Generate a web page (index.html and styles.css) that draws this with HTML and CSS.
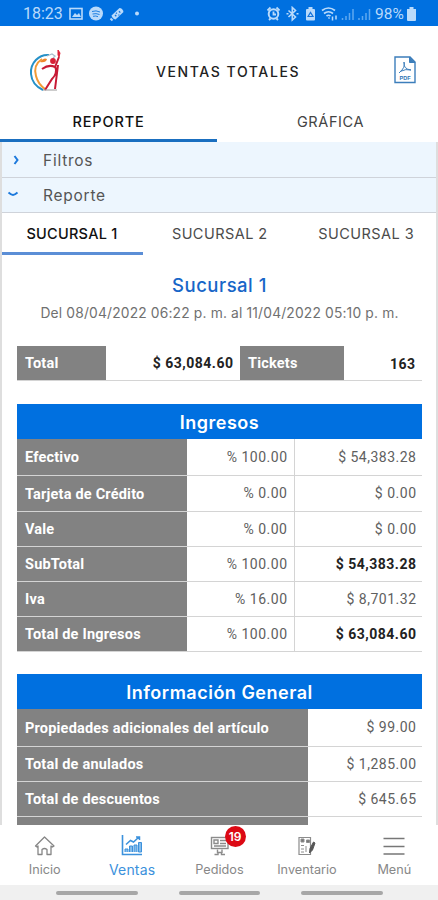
FILE: index.html
```html
<!DOCTYPE html>
<html lang="es">
<head>
<meta charset="utf-8">
<meta name="viewport" content="width=device-width, initial-scale=1">
<title>Ventas totales</title>
<link rel="stylesheet" href="styles.css">
</head>
<body>
<div class="app">
  <div class="status">
    <span class="clock">18:23</span>
    <svg class="status-left" width="72" height="16" viewBox="0 0 72 16" fill="none" stroke="#b9dafb" stroke-width="1.6">
      <rect x="1" y="2.5" width="12" height="10.5"/><path d="M3 11l3-4 2 2 2-2 2 4z" fill="#b9dafb" stroke="none"/>
      <circle cx="27" cy="7.5" r="7" fill="#b9dafb" stroke="none"/><path d="M23 5.500q4-1.500 8 .5M23.500 8q3.500-1 7 .5M24 10.300q3-.8 5 .4" stroke="#1f80e2" stroke-width="1"/>
      <path d="M42.500 9.500l8-7.500q3 0 4 4l-8 7.500q-3-.5-4-4z" fill="#b9dafb" stroke="none"/><path d="M41.500 12.500l2 2" stroke-width="2"/><path d="M46 9l1.300 1.300M50 5.300l1.300 1.300M49.500 8.600l.8.8M47 6.800l.8.800" stroke="#1473db" stroke-width="1.300"/>
      <circle cx="68" cy="7.500" r="2" fill="#b9dafb" stroke="none"/>
    </svg>
    <svg class="status-right" width="106" height="16" viewBox="0 0 106 16" fill="none" stroke="#b9dafb" stroke-width="1.600">
      <circle cx="7.500" cy="8" r="4.800" stroke-width="2"/><path d="M1.500 4.500l3-3M13.500 4.500l-3-3M3 14l1.500-1.500M12 14l-1.500-1.500M7.500 5.500v3h2.500" stroke-width="1.800"/>
      <path d="M22.500 4.500l7 6.500-3.200 3V1.500l3.200 3-7 6.500M20.500 7.800h2M30.500 7.800h2" />
      <rect x="40" y="3" width="9" height="11.500" rx="1" fill="#b9dafb" stroke="none"/><rect x="42.500" y="1" width="4" height="2" fill="#b9dafb" stroke="none"/><path d="M42 10.500l2.500-4 2.500 4z" stroke="#1473db" stroke-width="1.200"/>
      <path d="M56 4.500q6.500-5 13 0M58 7.500q4.500-3.500 9 0M60.500 10q2-1.500 4 0M62.500 12.500l1-1" stroke-width="1.700"/><path d="M66.500 14.500v-4M70 9.500v4" stroke-width="1.500"/>
      <path d="M76.500 14v-2M80 14v-4M83.500 14V7M87 14V3M93 14v-2M96.500 14v-4M100 14V7M103.500 14V3" stroke="#5ea8f0" stroke-width="1.500"/>
    </svg>
    <span class="percent">98%</span>
    <svg class="battery" width="9" height="14" viewBox="0 0 9 14"><path d="M2.500 0h4v2H9v11q0 1-1 1H1q-1 0-1-1V2h2.500z" fill="#b9dafb"/></svg>
  </div>

  <header class="header">
    <svg class="logo" width="34" height="44" viewBox="0 0 34 44" fill="none">
      <path d="M20 6C10 5 1 14 2 25q1 11 12 16" stroke="#2590c7" stroke-width="2"/>
      <path d="M13 10C7 14 5 20 7 27q2 8 9 13" stroke="#f39a35" stroke-width="2"/>
      <path d="M11 13q4-5 7-3-1 4-7 3z" fill="#ef8629"/>
      <path d="M18 7l5-2 3 2-2 2" stroke="#a8bccb" stroke-width="1.300"/>
      <circle cx="24" cy="12" r="2.900" fill="#d81f36"/>
      <path d="M13 20q7-5 13-2l4-10M26 17q3 7-3 13l-7 11M29 16l-3 24" stroke="#c71a35" stroke-width="2"/>
      <path d="M29 1l2 3-1 4-1-2z" fill="#df2036" stroke="#df2036"/>
      <path d="M14 41h14" stroke="#9a9a9a"/>
    </svg>
    <h1 class="title">VENTAS TOTALES</h1>
    <svg class="pdf" width="22" height="28" viewBox="0 0 22 28" fill="none" stroke="#3c7ebb">
      <path d="M1 1h15l5 5v20.500H1z" stroke-width="1.400"/><path d="M15.500 1v5.500H21z" fill="#3c7ebb"/>
      <path d="M10 6q2 5-5 11M10 6q-1 7 7 8M6 15.500q6-3 11-1.500" stroke-width="1"/>
      <text x="5.600" y="24" class="pdf-text">PDF</text>
    </svg>
  </header>

  <nav class="tabs">
    <span class="tab tab-on">REPORTE</span>
    <span class="tab">GRÁFICA</span>
  </nav>

  <main class="panel">
    <div class="fold"><svg class="chev" width="12" height="12" viewBox="0 0 12 12"><path d="M4.500 2l3 4-3 4" /></svg><span>Filtros</span></div>
    <div class="fold fold-open"><svg class="chev chev-down" width="12" height="12" viewBox="0 0 12 12"><path d="M1.500 4.500q3 2.500 4.500 2.500t4.500-2.500"/></svg><span>Reporte</span></div>

    <div class="branches">
      <span class="branch branch-on">SUCURSAL 1</span>
      <span class="branch">SUCURSAL 2</span>
      <span class="branch">SUCURSAL 3</span>
    </div>

    <section class="report">
      <h2 class="branch-title">Sucursal 1</h2>
      <p class="dates">Del 08/04/2022 06:22 p. m. al 11/04/2022 05:10 p. m.</p>

      <div class="summary">
        <span class="label">Total</span><span class="value strong total">$ 63,084.60</span>
        <span class="label">Tickets</span><span class="value strong count">163</span>
      </div>

      <h3 class="band ing">Ingresos</h3>
      <div class="table income">
        <span class="label">Efectivo</span><span class="value share">% 100.00</span><span class="value">$ 54,383.28</span>
        <span class="label">Tarjeta de Crédito</span><span class="value share">% 0.00</span><span class="value">$ 0.00</span>
        <span class="label">Vale</span><span class="value share">% 0.00</span><span class="value">$ 0.00</span>
        <span class="label">SubTotal</span><span class="value share">% 100.00</span><span class="value strong">$ 54,383.28</span>
        <span class="label">Iva</span><span class="value share">% 16.00</span><span class="value">$ 8,701.32</span>
        <span class="label">Total de Ingresos</span><span class="value share">% 100.00</span><span class="value strong">$ 63,084.60</span>
      </div>

      <h3 class="band info">Información General</h3>
      <div class="table general">
        <span class="label">Propiedades adicionales del artículo</span><span class="value">$ 99.00</span>
        <span class="label">Total de anulados</span><span class="value">$ 1,285.00</span>
        <span class="label">Total de descuentos</span><span class="value">$ 645.65</span>
        <span class="label"></span><span class="value"></span>
      </div>
    </section>
  </main>

  <nav class="bottom">
    <a class="item"><svg width="22" height="24" viewBox="0 0 22 24" fill="none" stroke="#868686" stroke-width="1.300" stroke-linejoin="round"><path d="M1.500 12L10.500 3l9.500 9-1.500 1-1.500-1v8.500h-4V15.500q-2.500-2-5 0v5h-4V12L3 13z"/></svg><span>Inicio</span></a>
    <a class="item item-on"><svg width="22" height="24" viewBox="0 0 22 24" fill="none" stroke="#3b91dc"><path d="M1.500 1v19.500H21" stroke-width="1.600"/><path d="M4 18v-3h3v3M8.500 18v-6h3v6M13 18v-7h3v7M17.500 18V8.500h3V18z" fill="#83bbeb"/><path d="M5 10.500l4.500-4 3 1.500 5.500-5M15 3h3.500v3" stroke-width="1.500"/></svg><span>Ventas</span></a>
    <a class="item"><span class="badge">19</span><svg width="22" height="24" viewBox="0 0 22 24" fill="none" stroke="#8c8c8c"><rect x="2.500" y="3.500" width="16.500" height="11" stroke-width="1.400"/><path d="M5 6h4v3.500H5zM5 12h12M11 6.500h6M11 9.500h6M8.500 15.500v3.500M13 15.500v3.500M5.500 20.500h3.500v-2h3.500v2H16" stroke-width="1.400"/></svg><span>Pedidos</span></a>
    <a class="item"><svg width="22" height="24" viewBox="0 0 22 24" fill="none" stroke="#8c8c8c"><path d="M3 3.500h11.500v17H3z" stroke-width="1.200"/><path d="M5 5h3v3H5zM10.500 6h3v2.500h-3z" fill="#777"/><path d="M5 11.500h3M5 15h3M5 18h3M10 12v6"/><path d="M17.500 8l-3.500 6.500-.5 4.500 3-3L19 9z" fill="#555" stroke="#555"/></svg><span>Inventario</span></a>
    <a class="item"><svg width="22" height="24" viewBox="0 0 22 24" stroke="#777" stroke-width="1.700"><path d="M.5 4.500h21M.5 12.500h21M.5 20h21"/></svg><span>Menú</span></a>
  </nav>
  <div class="gesture"><i></i><i></i><i></i></div>
</div>
</body>
</html>
```
FILE: styles.css
```css
* { box-sizing: border-box; }
body { margin: 0; background: #fff; }
.app { width: 438px; height: 900px; overflow: hidden; display: flex; flex-direction: column; font-family: Inter, "Open Sans", sans-serif; color: #4b4b4b; }
h1, h2, h3, p { margin: 0; }

.status { height: 26px; flex: none; background: #0070e0; display: flex; align-items: center; padding: 2px 22px 0 23px; color: #b9dafb; font: 16px/24px Roboto, sans-serif; }
.clock { width: 46px; font-size: 16px; }
.status-right { margin-left: 125px; }
.percent { font-size: 15.500px; margin-left: 3px; width: 31px; }
.battery { margin-left: 1px; }

.header { height: 79px; flex: none; display: flex; align-items: center; padding: 11px 22px 0 29px; justify-content: space-between; }
.title { font-size: 14px; font-weight: 500; letter-spacing: 1.600px; color: #222; margin-left: -1px; }
.pdf { margin-top: -3px; }
.pdf-text { font: 700 5.500px "Liberation Sans", sans-serif; fill: #2b72b5; stroke: none; }

.tabs { height: 37px; flex: none; display: flex; }
.tab { width: 217px; text-align: center; font-size: 14.500px; line-height: 33px; color: #444; letter-spacing: .6px; }
.tab + .tab { width: 221px; padding-left: 6px; }
.tab-on { border-bottom: 3px solid #1a6fc0; color: #111; font-weight: 500; letter-spacing: .85px; }

.panel { height: 683px; flex: none; overflow: hidden; border: solid #dedede; border-width: 0 2px; }
.fold { height: 36px; background: #edf6fe; border-bottom: 1px solid #cfd3da; display: flex; align-items: center; font-size: 15.500px; letter-spacing: .75px; color: #555; padding: 1px 0 0 8px; }
.fold-open { height: 35px; }
.chev { margin-right: 21px; fill: none; stroke: #1c79dc; stroke-width: 2; }
.chev-down { margin-left: -3px; margin-right: 24px; margin-top: -3px; }

.branches { height: 42px; display: flex; }
.branch { width: 146.500px; padding-left: 7px; text-align: center; font-size: 14.500px; letter-spacing: .45px; line-height: 42px; color: #4b4b4b; }
.branch-on { width: 141px; padding: 0 1px 0 0; border-bottom: 3px solid #5b8ed6; color: #111; font-weight: 500; letter-spacing: .25px; }

.report { padding: 0 14px 0 15px; }
.branch-title { text-align: center; color: #1766c8; font-size: 18.500px; letter-spacing: .5px; font-weight: 500; line-height: 24px; padding-top: 18px; }
.dates { text-align: center; font-size: 13.800px; letter-spacing: .17px; line-height: 18px; margin: 7px 0 24px; color: #707070; white-space: nowrap; }

.label, .value { display: flex; align-items: center; border-bottom: 1px solid #d4d4d4; white-space: nowrap; font-family: Roboto, sans-serif; }
.label { background: #828282; color: #fff; font-size: 14.500px; font-weight: 700; padding: 1px 0 0 8px; letter-spacing: .2px; }
.value { justify-content: flex-end; font-size: 14px; padding: 0 5.500px 1px 0; color: #606060; letter-spacing: .5px; }
.strong { font-weight: 700; color: #222; }
.total, .share { padding-right: 6.500px; }
.count { padding: 1px 6.500px 0 0; }
.share { border-right: 1px solid #d4d4d4; }
.summary { display: grid; grid-template-columns: 89px 134px 104px 78px; height: 35px; }
.band { height: 35px; background: #0070e0; color: #fff; text-align: center; font-size: 18px; line-height: 37px; font-weight: 600; letter-spacing: .5px; }
.ing { margin-top: 23px; }
.info { margin-top: 22px; }
.table { display: grid; }
.income { grid-template-columns: 170px 108px 127px; grid-template-rows: 37px 36px 35px 35px 35px 35px; }
.general { grid-template-columns: 291px 114px; grid-template-rows: 38px 35px 35px 35px; }

.bottom { height: 60px; flex: none; display: flex; background: #fff; padding: 0 0 0 1px; }
.item { flex: 1; display: flex; flex-direction: column; align-items: center; padding-top: 9px; font-size: 12.700px; line-height: 18px; color: #888; position: relative; }
.item span { margin-top: 3px; }
.item-on { color: #3b91dc; font-size: 14px; letter-spacing: .15px; }
.item .badge { position: absolute; left: 50%; top: 1px; margin: 0 0 0 5px; width: 21px; height: 21px; border-radius: 50%; background: #dc0914; color: #fff; font-size: 12px; font-weight: 600; line-height: 21px; text-align: center; }
.gesture { height: 15px; flex: none; background: #f0f0f0; display: flex; padding: 6px 0 0 56px; gap: 41px; }
.gesture i { width: 81.500px; height: 4px; border-radius: 2px; background: #a7a7a7; }
```
